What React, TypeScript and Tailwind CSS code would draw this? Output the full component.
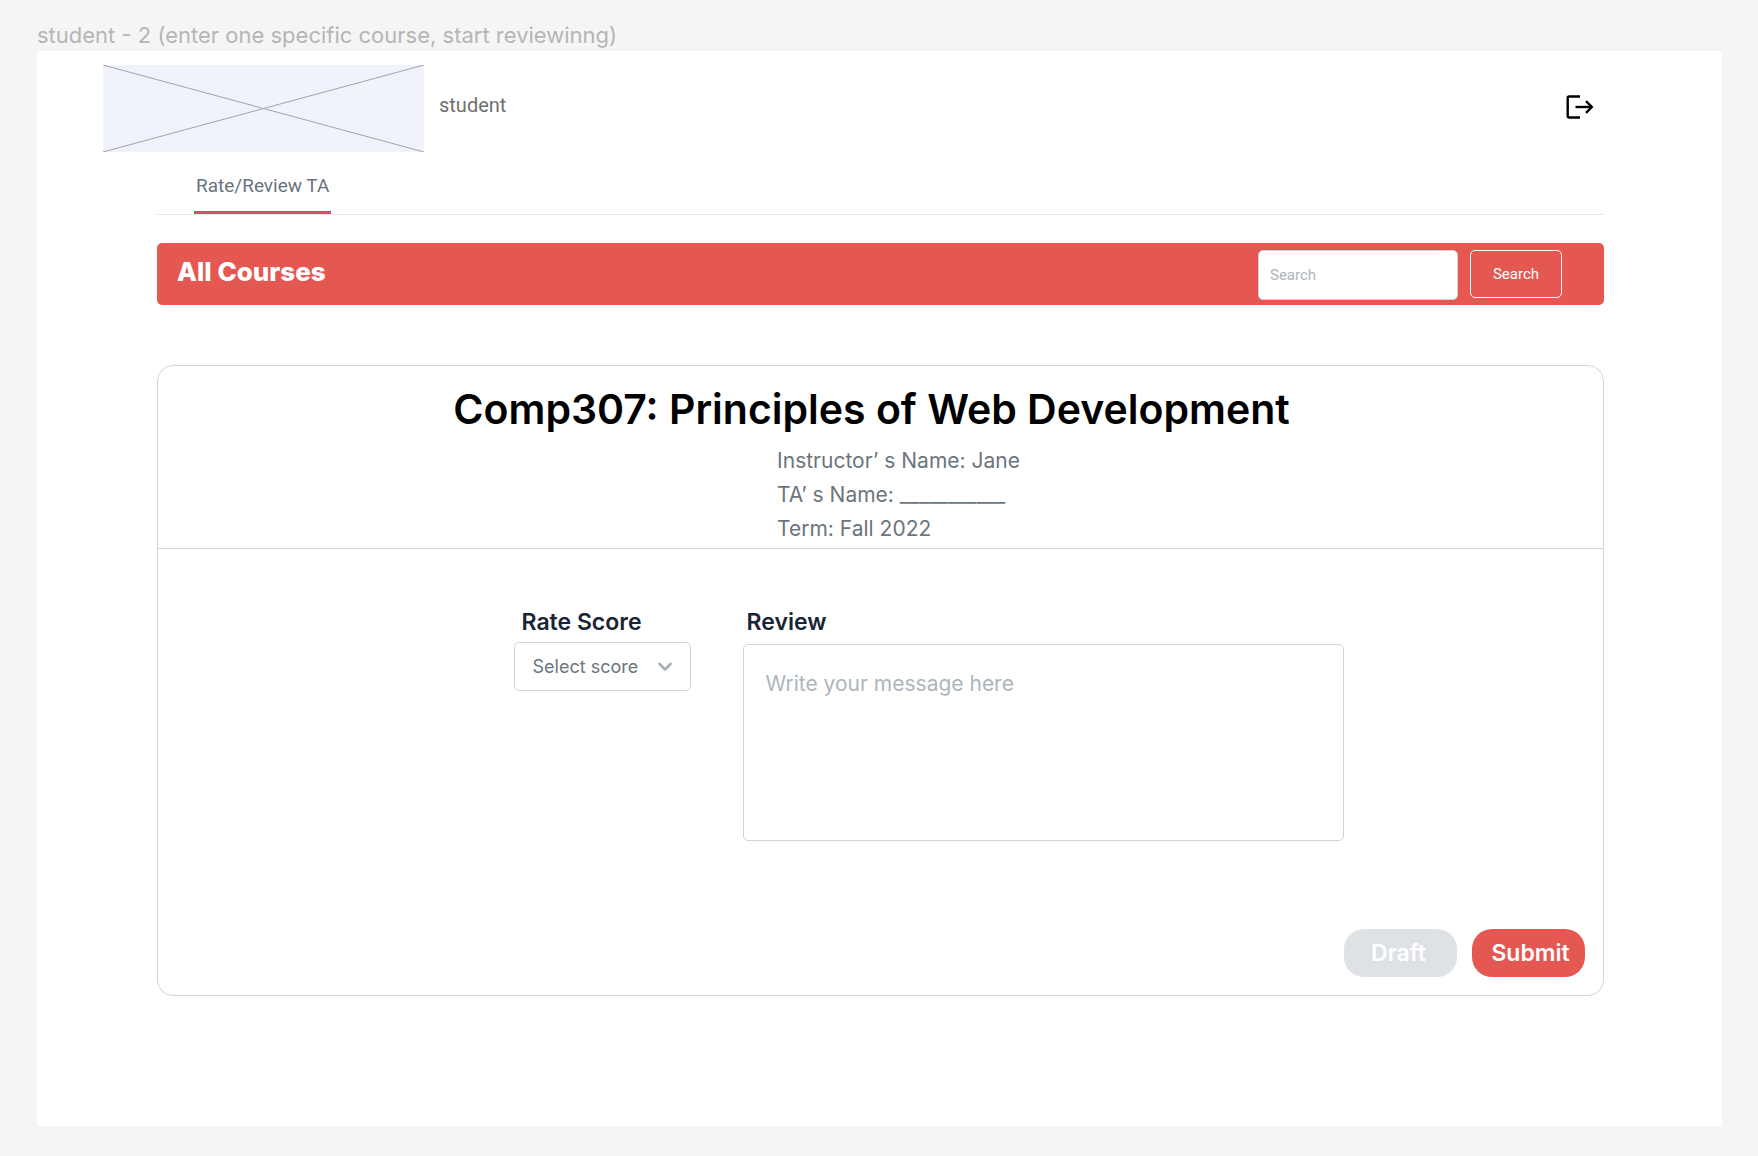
const scores = ["1", "2", "3", "4", "5"];

function LogoPlaceholder() {
  return (
    <svg
      className="h-[87px] w-[321px] shrink-0 bg-[#f0f3fc]"
      viewBox="0 0 321 87"
      role="img"
      aria-label="Logo placeholder"
    >
      <path d="M0 0L321 87M0 87L321 0" stroke="#a3a3a3" strokeWidth="1" fill="none" />
    </svg>
  );
}

function LogoutIcon() {
  return (
    <svg className="h-6 w-7" viewBox="0 0 28 24" fill="none" stroke="#000" strokeWidth="2.4" aria-hidden="true">
      <path d="M14 1.5H3.2Q1.7 1.5 1.7 3V21Q1.7 22.5 3.2 22.5H14" />
      <path d="M9.5 12H26" />
      <path d="M20 6.2L25.8 12L20 17.8" />
    </svg>
  );
}

function Header() {
  return (
    <header className="flex items-center pr-32 pl-[66px]">
      <LogoPlaceholder />
      <span className="ml-[15px] pb-2 font-[Roboto,sans-serif] text-[20px] leading-6 text-[#6f6f6f]">student</span>
      <button type="button" aria-label="Log out" className="ml-auto pb-1">
        <LogoutIcon />
      </button>
    </header>
  );
}

function Tabs() {
  return (
    <nav className="mt-3 flex border-b border-[#e2e5e9] pl-[37px]">
      <a
        href="#rate"
        className="border-b-[3px] border-[#cf5163] px-0.5 pt-2.5 pb-[13px] font-[Roboto,sans-serif] text-[19px] leading-6 text-[#6b7280]"
      >
        Rate/Review TA
      </a>
    </nav>
  );
}

function CoursesBar() {
  return (
    <div className="mt-7 flex h-[62px] items-center rounded-[5px] bg-[#e55851] pr-[42px] pl-5">
      <h2 className="pb-1 text-[26px] leading-8 font-extrabold text-white">All Courses</h2>
      <form className="mt-px ml-auto flex items-start gap-3 font-[Roboto,sans-serif] text-[15px] leading-5" onSubmit={(e) => e.preventDefault()}>
        <input
          type="search"
          aria-label="Search courses"
          placeholder="Search"
          className="h-[50px] w-[200px] rounded-[5px] border border-[#ced4da] bg-white px-[11px] text-[#212936] outline-none placeholder:text-[#adb5bd]"
        />
        <button type="submit" className="h-12 w-[92px] rounded-[5px] border border-white text-white">
          Search
        </button>
      </form>
    </div>
  );
}

function ReviewCard() {
  return (
    <section className="mt-[60px] rounded-2xl border border-[#d0d6dc]">
      <div className="flex flex-col items-center border-b border-[#d0d6dc] pt-[15px] pb-0.5">
        <h1 className="pr-[18px] text-[41px] leading-[56px] font-semibold text-black">
          Comp307: Principles of Web Development
        </h1>
        <div className="mt-[7px] pl-9 text-[21px] leading-[34px] text-[#6c757d]">
          <p>Instructor’ s Name: Jane</p>
          <p>TA’ s Name: ___________</p>
          <p>Term: Fall 2022</p>
        </div>
      </div>

      <form className="px-[18px] pt-[57px] pb-[18px]" onSubmit={(e) => e.preventDefault()}>
        <div className="flex justify-center gap-[52px] pl-24">
          <div className="flex flex-col">
            <label htmlFor="score" className="pl-2 text-[23px] leading-8 font-semibold text-[#192434]">
              Rate Score
            </label>
            <div className="relative mt-1">
              <select
                id="score"
                defaultValue=""
                className="h-[49px] w-[177px] appearance-none rounded-[5px] border border-[#ced4da] bg-white pl-[18px] text-[18px] leading-6 text-[#6c757d] outline-none"
              >
                <option value="">Select score</option>
                {scores.map((s) => (
                  <option key={s}>{s}</option>
                ))}
              </select>
              <svg
                className="pointer-events-none absolute top-5 right-[18px] h-2.5 w-4"
                viewBox="0 0 16 10"
                fill="none"
                stroke="#a4aeb8"
                strokeWidth="2.6"
                strokeLinecap="round"
                strokeLinejoin="round"
                aria-hidden="true"
              >
                <path d="M2.5 1.8L8 7.5L13.5 1.8" />
              </svg>
            </div>
          </div>
          <div className="flex w-[601px] flex-col">
            <label htmlFor="review" className="pl-1 text-[23px] leading-8 font-semibold text-[#192434]">
              Review
            </label>
            <textarea
              id="review"
              placeholder="Write your message here"
              className="mt-1.5 h-[197px] resize-none rounded-[5px] border border-[#ced4da] bg-white px-[22px] py-[25px] text-[21px] leading-7 text-[#212936] outline-none placeholder:text-[#adb5bd]"
            />
          </div>
        </div>
        <div className="mt-[88px] flex justify-end gap-[15px] text-[23px] leading-8 font-semibold text-white">
          <button type="button" className="h-12 w-[113px] rounded-[20px] bg-[#dee2e6] pr-1">
            Draft
          </button>
          <button type="submit" className="h-12 w-[113px] rounded-[20px] bg-[#e55851] pl-1">
            Submit
          </button>
        </div>
      </form>
    </section>
  );
}

export default function App() {
  return (
    <div className="flex min-h-screen flex-col bg-[#f5f5f5] px-9 pt-5 pb-[30px] font-[Inter,sans-serif]">
      <p className="pl-px text-[22px] leading-[31px] text-[#b5b5b5]">
        student - 2 (enter one specific course, start reviewinng)
      </p>
      <main className="ml-px flex-1 bg-white pt-3.5 pb-32">
        <Header />
        <div className="pr-[118px] pl-[120px]">
          <Tabs />
          <CoursesBar />
          <ReviewCard />
        </div>
      </main>
    </div>
  );
}
